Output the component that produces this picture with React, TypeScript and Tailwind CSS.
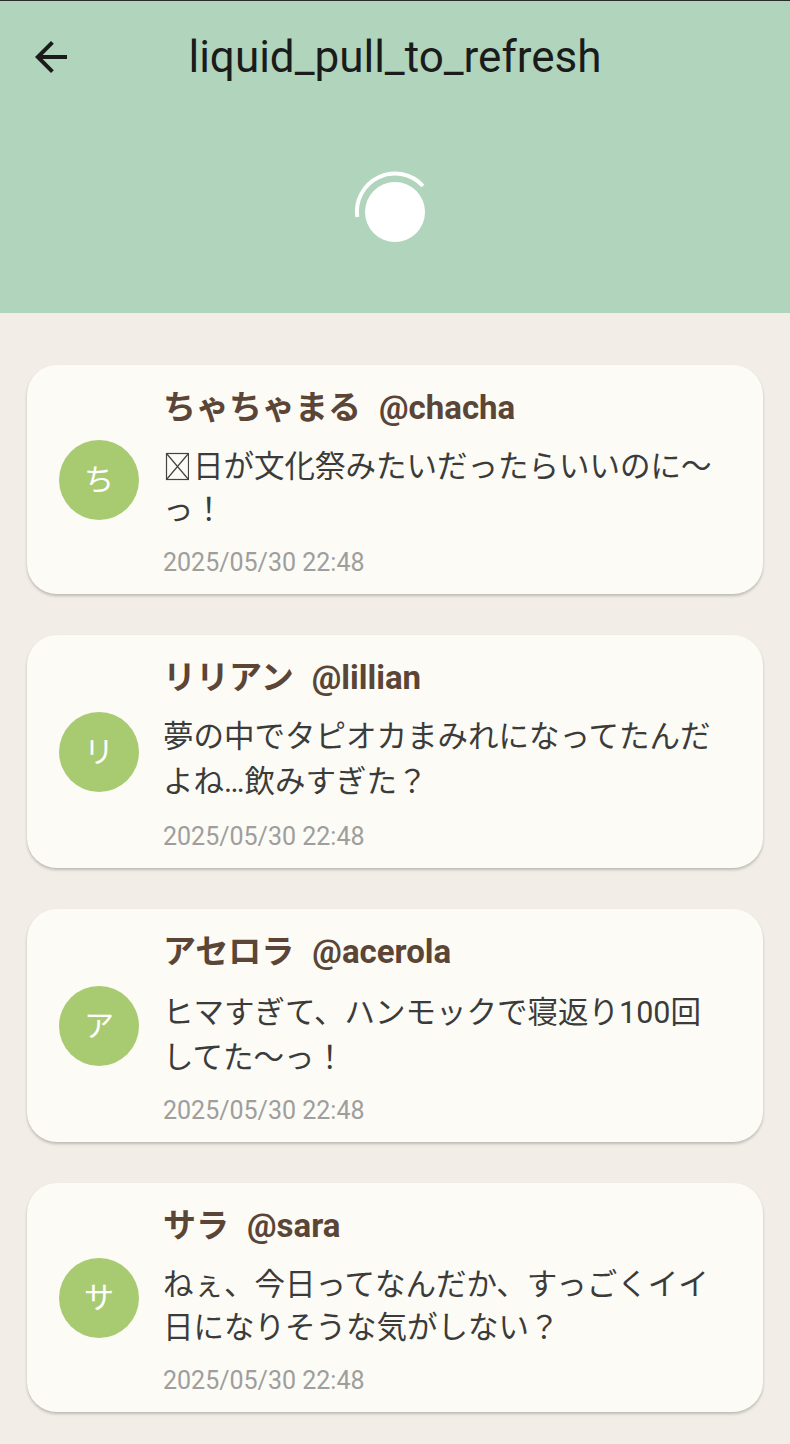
import React from "react";

type Post = {
  name: string;
  handle: string;
  initial: string;
  body: React.ReactNode;
};

// latin runs sit a bit taller on the line, like the device render
function Latin({ children }: { children: React.ReactNode }) {
  return <span className="leading-[47px]">{children}</span>;
}

// missing-glyph box, as the device draws it
function Tofu() {
  return (
    <svg
      width="26"
      height="30"
      viewBox="0 0 26 30"
      className="mr-[4px] inline-block align-[-5px]"
    >
      <rect x="3.5" y="1.5" width="22" height="26" fill="none" stroke="#444" strokeWidth="1.2" />
      <path d="M3.5 1.5L25.5 27.5M25.5 1.5L3.5 27.5" stroke="#444" strokeWidth="1.2" />
    </svg>
  );
}

const posts: Post[] = [
  {
    name: "ちゃちゃまる",
    handle: "@chacha",
    initial: "ち",
    body: (
      <>
        <Tofu />
        日が文化祭みたいだったらいいのに〜っ！
      </>
    ),
  },
  {
    name: "リリアン",
    handle: "@lillian",
    initial: "リ",
    body: (
      <>
        夢の中でタピオカまみれになってたんだよね<Latin>…</Latin>飲みすぎた？
      </>
    ),
  },
  {
    name: "アセロラ",
    handle: "@acerola",
    initial: "ア",
    body: (
      <>
        ヒマすぎて、ハンモックで寝返り<Latin>100</Latin>回してた〜っ！
      </>
    ),
  },
  {
    name: "サラ",
    handle: "@sara",
    initial: "サ",
    body: "ねぇ、今日ってなんだか、すっごくイイ日になりそうな気がしない？",
  },
];

function BackArrow() {
  return (
    <svg width="48" height="48" viewBox="0 0 24 24" fill="#1b1b1b">
      <path d="M20 11H7.83l5.59-5.59L12 4l-8 8 8 8 1.41-1.41L7.83 13H20v-2z" />
    </svg>
  );
}

function Spinner() {
  return (
    <svg width="100" height="100" viewBox="0 0 100 100">
      <circle cx="50" cy="50" r="30" fill="#ffffff" />
      <path
        d="M12.3 55 A38 38 0 0 1 78 24"
        fill="none"
        stroke="#ffffff"
        strokeWidth="4"
      />
    </svg>
  );
}

function PostCard({ post }: { post: Post }) {
  return (
    <div className="flex items-center gap-[24px] rounded-[30px] bg-[#fcfbf5] pl-[32px] pr-[32px] pt-[24px] pb-[17px] shadow-[0_2px_3px_rgba(0,0,0,0.22)]">
      <div className="mb-[7px] flex h-20 w-20 shrink-0 items-center justify-center rounded-full bg-[#a8cb72] text-[30px] leading-none text-white">
        {post.initial}
      </div>
      <div className="w-[556px]">
        <div className="flex gap-[18px] text-[33px] font-bold leading-[38px] text-[#5b4536]">
          <span>{post.name}</span>
          <span>{post.handle}</span>
        </div>
        <p className="mt-[18px] text-[30.5px] leading-[43px] text-[#3b3b3b]">
          {post.body}
        </p>
        <p className="mt-[18px] text-[25px] leading-[28px] text-[#9e9e9e]">
          2025/05/30 22:48
        </p>
      </div>
    </div>
  );
}

export default function App() {
  return (
    <div className="min-h-[1444px] w-[790px] bg-[#f2ede7] font-['Roboto','Noto_Sans_CJK_JP',sans-serif]">
      <header className="flex h-[313px] flex-col border-t border-[#2a2a2a] bg-[#b0d4bc]">
        <div className="flex h-[111px] items-center">
          <div className="ml-[27px] flex h-12 w-12 items-center justify-center">
            <BackArrow />
          </div>
          <h1 className="mr-[75px] flex-1 text-center text-[44px] font-normal leading-none text-[#1b1b1b]">
            liquid_pull_to_refresh
          </h1>
        </div>
        <div className="flex flex-1 items-center justify-center pb-[2px]">
          <Spinner />
        </div>
      </header>
      <main className="flex flex-col gap-[41px] px-[27px] pb-[32px] pt-[52px]">
        {posts.map((p) => (
          <PostCard key={p.handle} post={p} />
        ))}
      </main>
    </div>
  );
}
